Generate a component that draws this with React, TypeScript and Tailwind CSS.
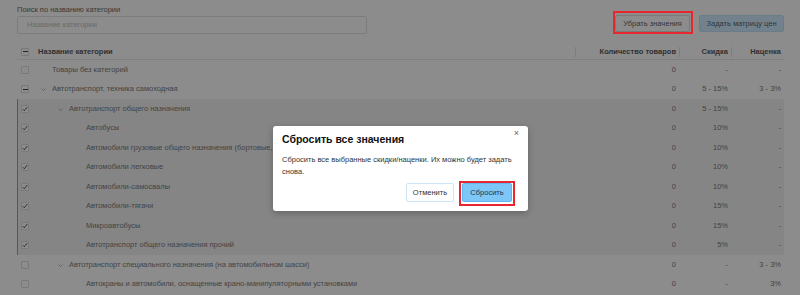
import React from 'react';

type Row = {
  name: string;
  level: number;
  chevron?: boolean;
  check: 'none' | 'dash' | 'on';
  count: string;
  discount: string;
  markup: string;
};

const topRows: Row[] = [
  { name: 'Товары без категорий', level: 0, check: 'none', count: '0', discount: '-', markup: '-' },
  { name: 'Автотранспорт, техника самоходная', level: 0, chevron: true, check: 'dash', count: '0', discount: '5 - 15%', markup: '3 - 3%' },
];

const selectedRows: Row[] = [
  { name: 'Автотранспорт общего назначения', level: 1, chevron: true, check: 'on', count: '0', discount: '5 - 15%', markup: '-' },
  { name: 'Автобусы', level: 2, check: 'on', count: '0', discount: '10%', markup: '-' },
  { name: 'Автомобили грузовые общего назначения (бортовые, шасси, фургоны)', level: 2, check: 'on', count: '0', discount: '10%', markup: '-' },
  { name: 'Автомобили легковые', level: 2, check: 'on', count: '0', discount: '10%', markup: '-' },
  { name: 'Автомобили-самосвалы', level: 2, check: 'on', count: '0', discount: '10%', markup: '-' },
  { name: 'Автомобили-тягачи', level: 2, check: 'on', count: '0', discount: '15%', markup: '-' },
  { name: 'Микроавтобусы', level: 2, check: 'on', count: '0', discount: '15%', markup: '-' },
  { name: 'Автотранспорт общего назначения прочий', level: 2, check: 'on', count: '0', discount: '5%', markup: '-' },
];

const bottomRows: Row[] = [
  { name: 'Автотранспорт специального назначения (на автомобильном шасси)', level: 1, chevron: true, check: 'none', count: '0', discount: '-', markup: '3 - 3%' },
  { name: 'Автокраны и автомобили, оснащенные крано-манипуляторными установками', level: 2, check: 'none', count: '0', discount: '-', markup: '3%' },
];

const Checkbox: React.FC<{ state: 'none' | 'dash' | 'on' }> = ({ state }) => (
  <div className="ml-[4px] w-[8px] h-[8px] shrink-0 rounded-[1px] border border-[#dcdcdc] bg-white flex items-center justify-center">
    {state === 'dash' && <div className="w-[5px] h-[1.5px] bg-[#444]" />}
    {state === 'on' && (
      <svg width="6" height="6" viewBox="0 0 6 6">
        <polyline points="0.8,3.2 2.3,4.8 5.2,1" fill="none" stroke="#444" strokeWidth="0.9" />
      </svg>
    )}
  </div>
);

const Chevron = () => (
  <svg width="5" height="3" viewBox="0 0 5 3" className="mt-[1px]">
    <polyline points="0.5,0.5 2.5,2.5 4.5,0.5" fill="none" stroke="#aaa" strokeWidth="0.9" />
  </svg>
);

const TableRow: React.FC<{ row: Row }> = ({ row }) => {
  const spacer = [12, 29, 46][row.level];
  return (
    <div className="flex items-center h-[19.5px] text-[#7c7c7c]">
      <div className="w-[558px] flex items-center min-w-0">
        <Checkbox state={row.check} />
        <div style={{ width: spacer }} className="shrink-0" />
        <div className="w-[11px] shrink-0 flex items-center">{row.chevron && <Chevron />}</div>
        <span className="whitespace-nowrap truncate">{row.name}</span>
      </div>
      <div className="w-[104px] text-right pr-[3px]">{row.count}</div>
      <div className="w-[52px] text-right pr-[3px]">{row.discount}</div>
      <div className="w-[53px] text-right pr-[3px]">{row.markup}</div>
    </div>
  );
};

const App: React.FC = () => {
  return (
    <div className="relative w-[800px] h-[295px] overflow-hidden bg-white font-['Liberation_Sans',Arial,sans-serif] text-[7.5px] leading-[10px]">
      <div className="pl-[17px] pr-[16px]">
        {/* Search + actions */}
        <div className="flex items-start justify-between">
          <div className="pt-[5px]">
            <div className="text-[#6a6a6a] h-[10px]">Поиск по названию категории</div>
            <div className="mt-[1px] w-[350px] h-[18px] border border-[#e4e4e4] rounded-[2px] flex items-center px-[9px] text-[#c2c2c2]">
              Название категории
            </div>
          </div>
          <div className="flex items-center gap-[9px] pt-[15px]">
            <button className="w-[75px] h-[17px] bg-white border border-[#dcdcdc] rounded-[2px] text-[#666]">
              Убрать значения
            </button>
            <button className="w-[85px] h-[17px] bg-[#d2ecff] border border-[#c4e2fa] rounded-[2px] text-[#52687a]">
              Задать матрицу цен
            </button>
          </div>
        </div>

        {/* Table */}
        <div className="mt-[7px] w-[767px]">
          <div className="flex items-center h-[19px] pt-[3px] border-b border-[#e8e8e8] font-bold text-[#5a5a5a]">
            <div className="w-[558px] flex items-center">
              <Checkbox state="dash" />
              <span className="ml-[9px]">Название категории</span>
            </div>
            <div className="w-[104px] h-[10px] border-l border-[#e4e4e4] text-right pr-[3px]">Количество товаров</div>
            <div className="w-[52px] h-[10px] border-l border-[#e4e4e4] text-right pr-[3px]">Скидка</div>
            <div className="w-[53px] h-[10px] border-l border-[#e4e4e4] text-right pr-[3px]">Наценка</div>
          </div>
          {topRows.map((r) => (
            <TableRow key={r.name} row={r} />
          ))}
          <div className="bg-[#f2f3f4] shadow-[inset_1px_0_0_#6aaee6]">
            {selectedRows.map((r) => (
              <TableRow key={r.name} row={r} />
            ))}
          </div>
          {bottomRows.map((r) => (
            <TableRow key={r.name} row={r} />
          ))}
        </div>
      </div>

      {/* Backdrop */}
      <div className="absolute inset-0 bg-black/45" />

      {/* Annotation around "Убрать значения" */}
      <div className="absolute left-[613px] top-[11px] w-[80px] h-[23px] border-2 border-[#e8262d]" />

      {/* Modal */}
      <div className="absolute left-[273px] top-[126px] w-[255px] h-[85px] bg-white rounded-[3px] shadow-[0_2px_6px_rgba(0,0,0,0.25)] px-[9px] pt-[7px]">
        <button className="absolute right-[9px] top-[3px] text-[9px] leading-[9px] text-[#666]">×</button>
        <div className="text-[10.5px] leading-[13px] font-bold text-[#111]">Сбросить все значения</div>
        <p className="mt-[8px] w-[232px] text-[7.5px] leading-[12px] text-[#333]">
          Сбросить все выбранные скидки/наценки. Их можно будет задать снова.
        </p>
        <div className="absolute right-[16px] top-[57px] flex gap-[8px]">
          <button className="w-[48px] h-[19px] bg-white border border-[#cfe4f5] rounded-[2px] text-[#333]">
            Отменить
          </button>
          <button className="w-[50px] h-[19px] bg-[#7cc6f8] border border-[#63b6ef] rounded-[2px] text-[#1d3550]">
            Сбросить
          </button>
        </div>
      </div>

      {/* Annotation around "Сбросить" */}
      <div className="absolute left-[459px] top-[181px] w-[56px] h-[25px] border-2 border-[#e8262d]" />
    </div>
  );
};

export default App;
